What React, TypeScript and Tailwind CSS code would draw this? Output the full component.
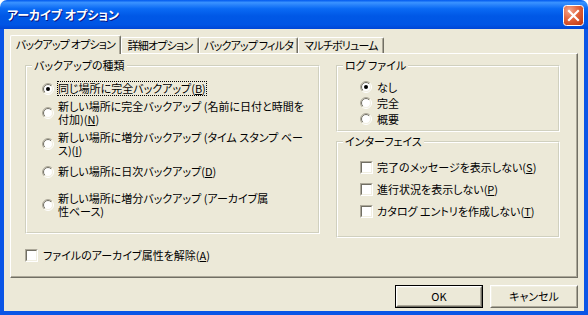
import type { ReactNode } from 'react';

const jp = "[font-family:'Noto_Sans_CJK_JP','Noto_Sans_CJK_SC',sans-serif] [font-feature-settings:'palt']";

function CloseButton() {
  return (
    <svg width="21" height="21" viewBox="0 0 21 21" className="shrink-0 mt-[1px]">
      <defs>
        <radialGradient id="closeFill" cx="0.3" cy="0.25" r="0.95">
          <stop offset="0" stopColor="#F4A68C" />
          <stop offset="0.45" stopColor="#E3663F" />
          <stop offset="1" stopColor="#C0370F" />
        </radialGradient>
      </defs>
      <rect x="0.5" y="0.5" width="20" height="20" rx="3" fill="url(#closeFill)" stroke="#fff" />
      <path d="M6 6 L15 15 M15 6 L6 15" stroke="#fff" strokeWidth="2.2" strokeLinecap="square" />
    </svg>
  );
}

function Radio({ checked }: { checked?: boolean }) {
  return (
    <svg width="12" height="12" viewBox="0 0 12 12" className="shrink-0">
      <defs>
        <linearGradient id="rOuter" x1="0" y1="0" x2="1" y2="1">
          <stop offset="0.5" stopColor="#ACA899" />
          <stop offset="0.5" stopColor="#FFFFFF" />
        </linearGradient>
        <linearGradient id="rInner" x1="0" y1="0" x2="1" y2="1">
          <stop offset="0.5" stopColor="#716F64" />
          <stop offset="0.5" stopColor="#F1EFE2" />
        </linearGradient>
      </defs>
      <circle cx="6" cy="6" r="5.5" fill="none" stroke="url(#rOuter)" />
      <circle cx="6" cy="6" r="4.5" fill="#fff" stroke="url(#rInner)" />
      {checked && <circle cx="6" cy="6" r="2" fill="#000" />}
    </svg>
  );
}

function Checkbox() {
  return (
    <div className="w-[13px] h-[13px] shrink-0 border border-t-[#ACA899] border-l-[#ACA899] border-b-white border-r-white">
      <div className="h-full bg-white border border-t-[#716F64] border-l-[#716F64] border-b-[#F1EFE2] border-r-[#F1EFE2]" />
    </div>
  );
}

function Group({ label, className, children }: { label: string; className: string; children: ReactNode }) {
  return (
    <div className={`relative border border-t-[#D0D0BF] border-l-[#D0D0BF] border-b-white border-r-white ${className}`}>
      <div className="h-full border border-t-white border-l-white border-b-[#D0D0BF] border-r-[#D0D0BF]">
        {children}
      </div>
      {/* label sits on the etched line */}
      <span className="absolute left-[6px] -top-[8px] px-[2px] bg-[#ECE9D8] leading-[14px] whitespace-nowrap">
        {label}
      </span>
    </div>
  );
}

function Key({ k }: { k: string }) {
  return <span className="underline underline-offset-[1px]">{k}</span>;
}

function Button({ children, isDefault }: { children: ReactNode; isDefault?: boolean }) {
  return (
    <div className={`w-[88px] h-[23px] ${isDefault ? 'border border-black' : ''}`}>
      <div className="h-full border border-t-white border-l-white border-b-[#716F64] border-r-[#716F64]">
        <div className="h-full flex items-center justify-center border border-t-[#F1EFE2] border-l-[#F1EFE2] border-b-[#ACA899] border-r-[#ACA899]">
          {children}
        </div>
      </div>
    </div>
  );
}

const tabs = [
  { label: 'バックアップ オプション', w: 'w-[111px]' },
  { label: '詳細オプション', w: 'w-[78px]' },
  { label: 'バックアップ フィルタ', w: 'w-[99px]' },
  { label: 'マルチボリューム', w: 'w-[86px]' },
];

export default function App() {
  return (
    <div className={`w-[588px] h-[315px] flex flex-col bg-white text-[11px] text-black ${jp}`}>
      {/* Title bar */}
      <div className="h-[29px] shrink-0 flex items-center pl-[7px] pr-[4px] rounded-t-[7px] bg-[linear-gradient(180deg,#0058EE_0%,#3A93FF_9%,#2A84FB_16%,#0A6AF4_30%,#0058E6_55%,#0055E5_85%,#0046D6_100%)]">
        <span className="flex-1 text-white font-bold text-[12px] [text-shadow:1px_1px_#0A1883] whitespace-nowrap">
          アーカイブ オプション
        </span>
        <CloseButton />
      </div>

      {/* Client area */}
      <div className="flex-1 flex flex-col bg-[#ECE9D8] border-x-4 border-b-4 border-[#0A55E6] pt-[6px] px-[6px]">
        {/* Tabs */}
        <div className="flex items-end h-[18px] tracking-[-0.8px]">
          {tabs.map((t, i) =>
            i === 0 ? (
              <div
                key={t.label}
                className={`${t.w} shrink-0 relative z-10 h-[19px] -mb-px flex items-center justify-center pb-[2px] bg-[#ECE9D8] rounded-t-[2px] border-t border-l border-r border-t-white border-l-white border-r-[#716F64] shadow-[inset_-1px_0_0_#ACA899] whitespace-nowrap`}
              >
                {t.label}
              </div>
            ) : (
              <div
                key={t.label}
                className={`${t.w} shrink-0 h-[16px] flex items-center justify-center rounded-t-[2px] border-t border-l border-r border-t-white border-l-white border-r-[#716F64] shadow-[inset_-1px_0_0_#ACA899] whitespace-nowrap`}
              >
                {t.label}
              </div>
            )
          )}
        </div>

        {/* Tab panel */}
        <div className="h-[225px] flex pl-[14px] pt-[11px] border border-t-white border-l-white border-b-[#716F64] border-r-[#716F64] shadow-[inset_-1px_-1px_0_#ACA899]">
          {/* Left column */}
          <div className="w-[295px] flex flex-col">
            <Group label="バックアップの種類" className="h-[169px]">
              <div className="flex flex-col pl-[15px] pt-[15px] leading-[13px] whitespace-nowrap">
                <div className="flex items-center gap-[4px]">
                  <Radio checked />
                  <span className="outline-1 outline-dotted outline-black">
                    同じ場所に完全バックアップ(<Key k="B" />)
                  </span>
                </div>
                <div className="flex items-center gap-[4px] mt-[5px]">
                  <Radio />
                  <div>
                    <span className="block">新しい場所に完全バックアップ (名前に日付と時間を</span>
                    <span className="block">
                      付加)(<Key k="N" />)
                    </span>
                  </div>
                </div>
                <div className="flex items-center gap-[4px] mt-[5px]">
                  <Radio />
                  <div>
                    <span className="block">新しい場所に増分バックアップ (タイム スタンプ ベー</span>
                    <span className="block">
                      ス)(<Key k="I" />)
                    </span>
                  </div>
                </div>
                <div className="flex items-center gap-[4px] mt-[8px]">
                  <Radio />
                  <span>
                    新しい場所に日次バックアップ(<Key k="D" />)
                  </span>
                </div>
                <div className="flex items-center gap-[4px] mt-[14px]">
                  <Radio />
                  <div>
                    <span className="block">新しい場所に増分バックアップ (アーカイブ属</span>
                    <span className="block">性ベース)</span>
                  </div>
                </div>
              </div>
            </Group>
            <div className="flex items-center gap-[5px] mt-[13px] whitespace-nowrap">
              <Checkbox />
              <span>
                ファイルのアーカイブ属性を解除(<Key k="A" />)
              </span>
            </div>
          </div>

          {/* Right column */}
          <div className="w-[224px] ml-[16px] flex flex-col">
            <Group label="ログ ファイル" className="h-[67px]">
              <div className="flex flex-col pl-[22px] pt-[12px]">
                {['なし', '完全', '概要'].map((l, i) => (
                  <div key={l} className="h-[16px] flex items-center gap-[5px]">
                    <Radio checked={i === 0} />
                    <span>{l}</span>
                  </div>
                ))}
              </div>
            </Group>
            <Group label="インターフェイス" className="h-[97px] mt-[9px]">
              <div className="flex flex-col pl-[22px] pt-[13px] whitespace-nowrap">
                <div className="h-[22px] flex items-center gap-[4px]">
                  <Checkbox />
                  <span>
                    完了のメッセージを表示しない(<Key k="S" />)
                  </span>
                </div>
                <div className="h-[22px] flex items-center gap-[4px]">
                  <Checkbox />
                  <span>
                    進行状況を表示しない(<Key k="P" />)
                  </span>
                </div>
                <div className="h-[22px] flex items-center gap-[4px]">
                  <Checkbox />
                  <span>
                    カタログ エントリを作成しない(<Key k="T" />)
                  </span>
                </div>
              </div>
            </Group>
          </div>
        </div>

        {/* Buttons */}
        <div className="flex justify-end gap-[7px] mt-[7px]">
          <Button isDefault>OK</Button>
          <Button>キャンセル</Button>
        </div>
      </div>
    </div>
  );
}
